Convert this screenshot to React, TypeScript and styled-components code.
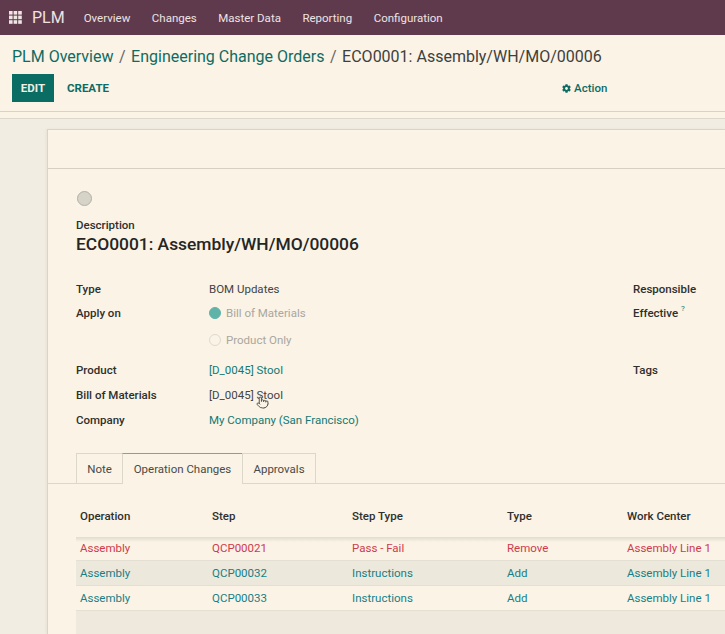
import React from "react";
import styled, { createGlobalStyle } from "styled-components";
import { FaCog } from "react-icons/fa";
import { Pointer } from "lucide-react";

const Global = createGlobalStyle`
  html, body { margin: 0; padding: 0; background: #faf3e6; }
  body { font-family: Roboto, "Liberation Sans", sans-serif; font-size: 11.5px; color: #333; }
`;

const Page = styled.div`
  width: 725px; height: 634px; overflow: hidden;
  display: flex; flex-direction: column; background: #faf3e6;
`;
const Nav = styled.nav`
  height: 35px; flex: none; background: #5f3a4c; color: #f1e8e4;
  display: flex; align-items: center; padding-left: 9px;
`;
const Brand = styled.span`
  font-size: 16px; margin: 0 19px 0 10px; color: #eee3e3;
`;
const NavItem = styled.a`
  font-size: 11.5px; margin-right: 21.5px; color: #eee3e3;
`;
const Control = styled.header`
  height: 77px; flex: none; box-sizing: border-box; padding: 12px 12px 0;
  border-bottom: 1px solid #d8d3c7;
`;
const Crumbs = styled.div`
  font-size: 16px; line-height: 19px; color: #3f3f3c; display: flex; gap: 5.5px;
`;
const Crumb = styled.a`
  color: #0f6b62;
`;
const Sep = styled.span`
  color: #666;
`;
const Actions = styled.div`
  display: flex; align-items: center; margin-top: 8px; position: relative;
`;
const Edit = styled.button`
  width: 42px; height: 28px; border: 0; padding: 0; background: #0a6d64; color: #f3efe6;
  font: 700 11.5px Roboto, sans-serif;
`;
const Create = styled.button`
  border: 0; background: none; padding: 0; margin-left: 13px; color: #0f6b62;
  font: 700 11.5px Roboto, sans-serif;
`;
const Action = styled.div`
  margin-left: 453px; display: flex; align-items: center; gap: 3px; color: #0f6b62;
  font-weight: 500; font-size: 11.5px;
`;
const Spacer = styled.div`
  height: 6px; flex: none; border-bottom: 1px solid #dcd7cb;
`;
const Content = styled.main`
  flex: 1; min-height: 0; background: #f2ede2; padding: 10px 0 0 47px;
`;
const Sheet = styled.section`
  height: 100%; background: #faf3e6; border: 1px solid #d9d4c8; border-right: 0; border-bottom: 0;
  box-sizing: border-box; box-shadow: -1px 0 2px #e6e1d5;
`;
const SheetHead = styled.div`
  height: 38px; border-bottom: 1px solid #d6d0c4;
`;
const Body = styled.div`
  padding: 22px 0 0 28px;
`;
const Status = styled.div`
  width: 13px; height: 13px; margin-left: 1px; border-radius: 50%; background: #d6d3c9; border: 1px solid #b3afa5;
`;
const Label = styled.div`
  font-weight: 500; color: #2f2f2d; font-size: 11.5px; line-height: 14px;
`;
const DescLabel = styled(Label)`
  margin-top: 12px;
`;
const Title = styled.h1`
  margin: 1px 0 0; font-size: 17.4px; line-height: 22px; font-weight: 500; color: #252523;
`;
const FormGrid = styled.div`
  display: grid; grid-template-columns: 133px 424px 1fr; margin-top: 27px;
`;
const Cell = styled.div<{ $h: number }>`
  height: ${(p) => p.$h}px; line-height: 14px; font-size: 11.5px; color: #444;
  display: flex; align-items: flex-start; position: relative;
`;
const Bold = styled.span`
  font-weight: 500; color: #2f2f2d;
`;
const Link = styled.a`
  color: #137a73;
`;
const Help = styled.sup`
  color: #137a73; font-size: 8px; margin-left: 3px; line-height: 0; position: relative; top: 3px;
`;
const Radio = styled.span<{ $on?: boolean }>`
  width: 12px; height: 12px; box-sizing: border-box; border-radius: 50%; margin: 1px 5px 0 0; flex: none;
  background: ${(p) => (p.$on ? "#5fb3a8" : "transparent")};
  border: 1px solid ${(p) => (p.$on ? "#5fb3a8" : "#dedad0")};
`;
const Muted = styled.span`
  color: #a9a79f;
`;
const Cursor = styled.span`
  position: absolute; left: 47px; top: 8px; color: #3c3c3a; line-height: 0;
`;
const Tabs = styled.div`
  display: flex; height: 30px; margin-top: 20px; padding-left: 28px; border-bottom: 1px solid #dcd7cb;
`;
const Tab = styled.div<{ $active?: boolean; $w: number }>`
  width: ${(p) => p.$w}px; box-sizing: border-box; text-align: center; line-height: 30px; color: #4a4a47;
  border: 1px solid #dcd7cb; border-bottom: ${(p) => (p.$active ? "0" : "1px solid #dcd7cb")};
  background: #faf3e6;
  border-top-color: ${(p) => (p.$active ? "#a3929a" : "#dcd7cb")};
  height: 31px;
  position: relative; margin-right: -1px;
`;
const TableWrap = styled.div`
  margin: 13px 0 0 28px;
`;
const Cols = "132px 140px 155px 120px 1fr";
const HeadRow = styled.div`
  display: grid; grid-template-columns: ${Cols}; height: 39.5px; align-items: center;
  box-sizing: border-box; padding: 0 0 2px 4px; font-weight: 500; color: #2f2f2d;
`;
const Row = styled.div<{ $red?: boolean; $odd?: boolean; $first?: boolean }>`
  display: grid; grid-template-columns: ${Cols}; height: 24.75px; align-items: center;
  box-sizing: border-box; padding-left: 4px; border-bottom: 1px solid #e4dfd3;
  color: ${(p) => (p.$red ? "#cf3a4c" : "#177f86")};
  background: ${(p) =>
    p.$first
      ? "linear-gradient(#e0dcd0, #faf3e6 5px)"
      : p.$odd
      ? "#ece8db"
      : "transparent"};
`;
const Foot = styled.div`
  height: 30px; background: #eee9dc;
`;

const rows = [
  ["Assembly", "QCP00021", "Pass - Fail", "Remove", "Assembly Line 1"],
  ["Assembly", "QCP00032", "Instructions", "Add", "Assembly Line 1"],
  ["Assembly", "QCP00033", "Instructions", "Add", "Assembly Line 1"],
];

const AppsIcon = () => (
  <svg width="13" height="13" viewBox="0 0 13 13" fill="#efe6e4">
    {[0, 4.6, 9.2].flatMap((y) =>
      [0, 4.6, 9.2].map((x) => <rect key={`${x}-${y}`} x={x} y={y} width="3.6" height="3.6" />)
    )}
  </svg>
);

export default function App() {
  return (
    <Page>
      <Global />
      <Nav>
        <AppsIcon />
        <Brand>PLM</Brand>
        {["Overview", "Changes", "Master Data", "Reporting", "Configuration"].map((n) => (
          <NavItem key={n}>{n}</NavItem>
        ))}
      </Nav>
      <Control>
        <Crumbs>
          <Crumb>PLM Overview</Crumb>
          <Sep>/</Sep>
          <Crumb>Engineering Change Orders</Crumb>
          <Sep>/</Sep>
          <span>ECO0001: Assembly/WH/MO/00006</span>
        </Crumbs>
        <Actions>
          <Edit>EDIT</Edit>
          <Create>CREATE</Create>
          <Action>
            <FaCog size={9} />
            Action
          </Action>
        </Actions>
      </Control>
      <Spacer />
      <Content>
        <Sheet>
          <SheetHead />
          <Body>
            <Status />
            <DescLabel>Description</DescLabel>
            <Title>ECO0001: Assembly/WH/MO/00006</Title>
            <FormGrid>
              <Cell $h={24}><Bold>Type</Bold></Cell>
              <Cell $h={24}>BOM Updates</Cell>
              <Cell $h={24}><Bold>Responsible</Bold></Cell>

              <Cell $h={27}><Bold>Apply on</Bold></Cell>
              <Cell $h={27}><Radio $on /><Muted>Bill of Materials</Muted></Cell>
              <Cell $h={27}><Bold>Effective</Bold><Help>?</Help></Cell>

              <Cell $h={30} />
              <Cell $h={30}><Radio /><Muted>Product Only</Muted></Cell>
              <Cell $h={30} />

              <Cell $h={25}><Bold>Product</Bold></Cell>
              <Cell $h={25}><Link>[D_0045] Stool</Link></Cell>
              <Cell $h={25}><Bold>Tags</Bold></Cell>

              <Cell $h={25}><Bold>Bill of Materials</Bold></Cell>
              <Cell $h={25}>
                [D_0045] Stool
                <Cursor><Pointer size={13} strokeWidth={1.6} fill="#faf3e6" /></Cursor>
              </Cell>
              <Cell $h={25} />

              <Cell $h={20}><Bold>Company</Bold></Cell>
              <Cell $h={20}><Link>My Company (San Francisco)</Link></Cell>
              <Cell $h={20} />
            </FormGrid>
          </Body>
          <Tabs>
            <Tab $w={47}>Note</Tab>
            <Tab $w={121} $active>Operation Changes</Tab>
            <Tab $w={74}>Approvals</Tab>
          </Tabs>
          <TableWrap>
            <HeadRow>
              <span>Operation</span>
              <span>Step</span>
              <span>Step Type</span>
              <span>Type</span>
              <span>Work Center</span>
            </HeadRow>
            {rows.map((r, i) => (
              <Row key={r[1]} $red={i === 0} $odd={i === 1} $first={i === 0}>
                {r.map((c, j) => <span key={j}>{c}</span>)}
              </Row>
            ))}
            <Foot />
          </TableWrap>
        </Sheet>
      </Content>
    </Page>
  );
}
